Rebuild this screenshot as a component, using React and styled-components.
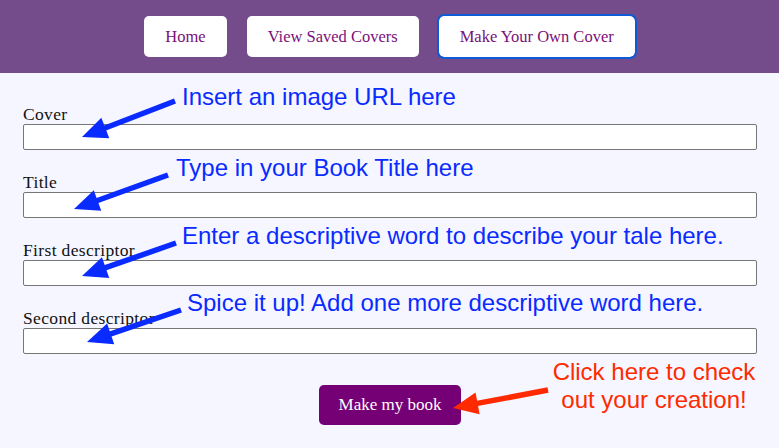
import React from "react";
import styled, { createGlobalStyle } from "styled-components";

const Global = createGlobalStyle`
  html, body { margin: 0; padding: 0; background: #f5f6ff; }
  body { font-family: "Liberation Serif", "Times New Roman", serif; }
`;

const Page = styled.div`
  position: relative;
  width: 779px;
  min-height: 448px;
  background: #f5f6ff;
  overflow: hidden;
`;

const Nav = styled.nav`
  height: 73px;
  background: #744c8b;
  display: flex;
  align-items: center;
  justify-content: center;
  gap: 20px;
`;

const NavButton = styled.button`
  height: 41px;
  padding: 0 21px;
  background: #ffffff;
  color: #7a0f7a;
  border: none;
  border-radius: 5px;
  font-family: "Liberation Serif", "Times New Roman", serif;
  font-size: 16.5px;
  cursor: pointer;
  outline: ${(p) => (p.$active ? "2px solid #0f5bd6" : "none")};
  outline-offset: 0;
`;

const Main = styled.main`
  padding: 31px 22px 0 23px;
`;

const Form = styled.form`
  display: flex;
  flex-direction: column;
`;

const Field = styled.div`
  display: flex;
  flex-direction: column;
  & + & { margin-top: 22px; }
`;

const Label = styled.label`
  font-size: 17.5px;
  line-height: 20px;
  letter-spacing: 0.35px;
  color: #111;
`;

const Input = styled.input`
  box-sizing: border-box;
  width: 100%;
  height: 26px;
  margin: 0;
  background: #fff;
  border: 1px solid #767676;
  border-radius: 2px;
`;

const ButtonRow = styled.div`
  display: flex;
  justify-content: center;
  margin-top: 31px;
`;

const MakeButton = styled.button`
  width: 142px;
  height: 40px;
  background: #750075;
  color: #fff;
  border: none;
  border-radius: 5px;
  font-family: "Liberation Serif", "Times New Roman", serif;
  font-size: 17px;
`;

const Overlay = styled.div`
  position: absolute;
  inset: 0;
  pointer-events: none;
`;

const ArrowLayer = styled.svg`
  position: absolute;
  left: 0;
  top: 0;
`;

const Note = styled.div`
  position: absolute;
  left: ${(p) => p.$x}px;
  top: ${(p) => p.$y}px;
  width: ${(p) => (p.$w ? `${p.$w}px` : "auto")};
  white-space: nowrap;
  text-align: ${(p) => (p.$center ? "center" : "left")};
  font-family: "Liberation Sans", Arial, Helvetica, sans-serif;
  font-size: 24px;
  line-height: 28px;
  color: ${(p) => (p.$red ? "#ff2a00" : "#0a2bff")};
`;

function Arrow({ x1, y1, x2, y2, color }) {
  const dx = x2 - x1;
  const dy = y2 - y1;
  const len = Math.hypot(dx, dy);
  const ux = dx / len;
  const uy = dy / len;
  const L = 25;
  const W = 11;
  const bx = x2 - ux * L;
  const by = y2 - uy * L;
  const nx = -uy;
  const ny = ux;
  const pts = `${x2},${y2} ${bx + nx * W},${by + ny * W} ${bx - nx * W},${by - ny * W}`;
  return (
    <g>
      <line x1={x1} y1={y1} x2={bx + ux * 3} y2={by + uy * 3} stroke={color} strokeWidth="5.5" />
      <polygon points={pts} fill={color} />
    </g>
  );
}

const BLUE = "#0a2bff";
const RED = "#ff2a00";

export default function App() {
  return (
    <Page>
      <Global />
      <Nav>
        <NavButton>Home</NavButton>
        <NavButton>View Saved Covers</NavButton>
        <NavButton $active>Make Your Own Cover</NavButton>
      </Nav>
      <Main>
        <Form onSubmit={(e) => e.preventDefault()}>
          <Field>
            <Label htmlFor="cover">Cover</Label>
            <Input id="cover" type="text" />
          </Field>
          <Field>
            <Label htmlFor="title">Title</Label>
            <Input id="title" type="text" />
          </Field>
          <Field>
            <Label htmlFor="d1">First descriptor</Label>
            <Input id="d1" type="text" />
          </Field>
          <Field>
            <Label htmlFor="d2">Second descriptor</Label>
            <Input id="d2" type="text" />
          </Field>
          <ButtonRow>
            <MakeButton type="submit">Make my book</MakeButton>
          </ButtonRow>
        </Form>
      </Main>
      <Overlay>
        <ArrowLayer width="779" height="448" viewBox="0 0 779 448">
          <Arrow x1={175} y1={101} x2={82} y2={137} color={BLUE} />
          <Arrow x1={168} y1={175} x2={74} y2={209} color={BLUE} />
          <Arrow x1={176} y1={243} x2={82} y2={276} color={BLUE} />
          <Arrow x1={181} y1={310} x2={87} y2={342} color={BLUE} />
          <Arrow x1={548} y1={390} x2={453} y2={408} color={RED} />
        </ArrowLayer>
        <Note $x={182} $y={83}>Insert an image URL here</Note>
        <Note $x={176} $y={154}>Type in your Book Title here</Note>
        <Note $x={182} $y={222}>Enter a descriptive word to describe your tale here.</Note>
        <Note $x={187} $y={289}>Spice it up! Add one more descriptive word here.</Note>
        <Note $x={544} $y={358} $w={220} $center $red>
          Click here to check
          <br />
          out your creation!
        </Note>
      </Overlay>
    </Page>
  );
}
